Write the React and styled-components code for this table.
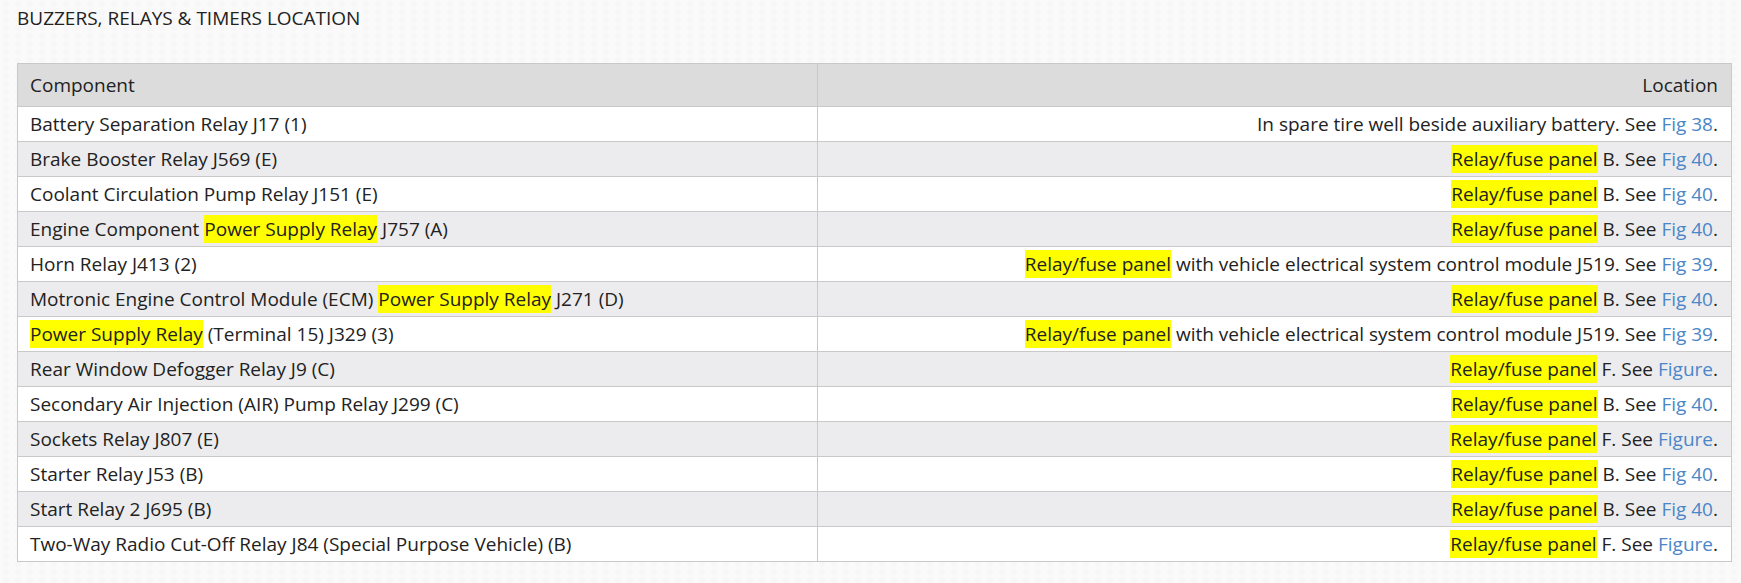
import React from "react";
import styled, { createGlobalStyle } from "styled-components";

const Global = createGlobalStyle`
  html, body { margin: 0; padding: 0; }
  body {
    background-color: #fafafa;
    background-image:
      radial-gradient(circle at 50% 50%, rgba(0,0,0,0.012) 40%, transparent 41%);
    background-size: 12px 8px;
    font-family: "Open Sans", "Noto Sans", sans-serif;
    color: #222;
  }
`;

const Page = styled.div`
  padding: 6px 17px 20px 17px;
  width: 1715px;
`;

const Title = styled.h2`
  margin: 0;
  font-size: 19px;
  font-weight: 400;
  line-height: 24px;
  color: #222;
`;

const Table = styled.table`
  margin-top: 33px;
  width: 1715px;
  border-collapse: collapse;
  border: 1px solid #c9c9c9;
  background: #fff;
  font-size: 19px;
`;

const Th = styled.th`
  background: #dcdcdc;
  height: 42px;
  padding: 0 13px 0 12px;
  text-align: ${(p) => (p.$right ? "right" : "left")};
  font-weight: 400;
  border: 1px solid #c9c9c9;
  width: ${(p) => p.$w || "auto"};
`;

const Tr = styled.tr`
  background: ${(p) => (p.$alt ? "#ececee" : "#fff")};
`;

const Td = styled.td`
  height: 34px;
  padding: 0 13px 0 12px;
  text-align: ${(p) => (p.$right ? "right" : "left")};
  border: 1px solid #c9c9c9;
  white-space: nowrap;
`;

const Mark = styled.span`
  background: #ffff00;
  padding: 1px 0;
`;

const Link = styled.a`
  color: #4a86c8;
  text-decoration: none;
`;

const H = ({ children }) => <Mark>{children}</Mark>;

const rows = [
  [<>Battery Separation Relay J17 (1)</>, <>In spare tire well beside auxiliary battery. See <Link>Fig 38</Link>.</>],
  [<>Brake Booster Relay J569 (E)</>, <><H>Relay/fuse panel</H> B. See <Link>Fig 40</Link>.</>],
  [<>Coolant Circulation Pump Relay J151 (E)</>, <><H>Relay/fuse panel</H> B. See <Link>Fig 40</Link>.</>],
  [<>Engine Component <H>Power Supply Relay</H> J757 (A)</>, <><H>Relay/fuse panel</H> B. See <Link>Fig 40</Link>.</>],
  [<>Horn Relay J413 (2)</>, <><H>Relay/fuse panel</H> with vehicle electrical system control module J519. See <Link>Fig 39</Link>.</>],
  [<>Motronic Engine Control Module (ECM) <H>Power Supply Relay</H> J271 (D)</>, <><H>Relay/fuse panel</H> B. See <Link>Fig 40</Link>.</>],
  [<><H>Power Supply Relay</H> (Terminal 15) J329 (3)</>, <><H>Relay/fuse panel</H> with vehicle electrical system control module J519. See <Link>Fig 39</Link>.</>],
  [<>Rear Window Defogger Relay J9 (C)</>, <><H>Relay/fuse panel</H> F. See <Link>Figure</Link>.</>],
  [<>Secondary Air Injection (AIR) Pump Relay J299 (C)</>, <><H>Relay/fuse panel</H> B. See <Link>Fig 40</Link>.</>],
  [<>Sockets Relay J807 (E)</>, <><H>Relay/fuse panel</H> F. See <Link>Figure</Link>.</>],
  [<>Starter Relay J53 (B)</>, <><H>Relay/fuse panel</H> B. See <Link>Fig 40</Link>.</>],
  [<>Start Relay 2 J695 (B)</>, <><H>Relay/fuse panel</H> B. See <Link>Fig 40</Link>.</>],
  [<>Two-Way Radio Cut-Off Relay J84 (Special Purpose Vehicle) (B)</>, <><H>Relay/fuse panel</H> F. See <Link>Figure</Link>.</>],
];

export default function App() {
  return (
    <Page>
      <Global />
      <Title>BUZZERS, RELAYS &amp; TIMERS LOCATION</Title>
      <Table>
        <thead>
          <tr>
            <Th $w="774px">Component</Th>
            <Th $right>Location</Th>
          </tr>
        </thead>
        <tbody>
          {rows.map((r, i) => (
            <Tr key={i} $alt={i % 2 === 1}>
              <Td>{r[0]}</Td>
              <Td $right>{r[1]}</Td>
            </Tr>
          ))}
        </tbody>
      </Table>
    </Page>
  );
}
